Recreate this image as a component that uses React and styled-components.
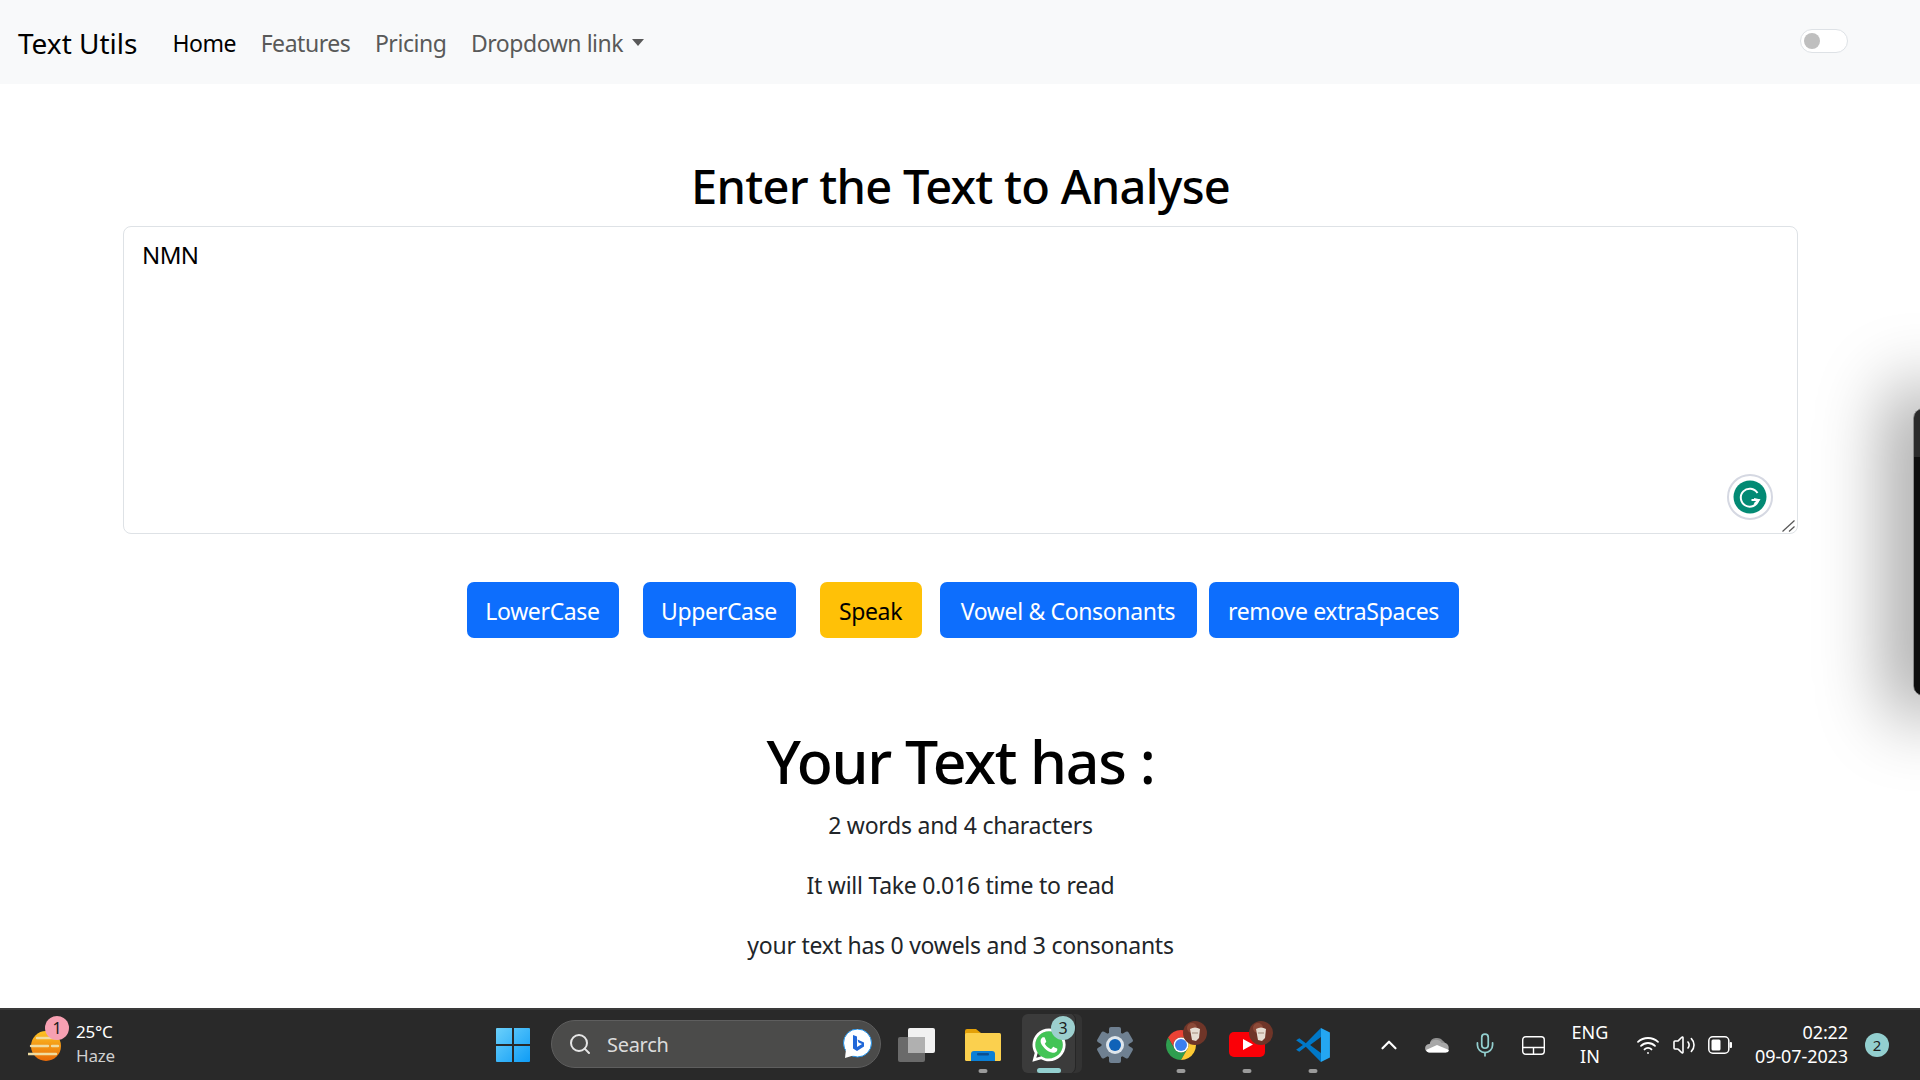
import styled, { createGlobalStyle } from "styled-components";
import { Mic, Search, Volume2, Wifi, ChevronUp } from "lucide-react";
import { FaWhatsapp } from "react-icons/fa";

const GlobalStyle = createGlobalStyle`
  html, body {
    margin: 0;
    padding: 0;
    background: #fff;
  }
  * {
    box-sizing: border-box;
  }
`;

const Page = styled.div`
  position: relative;
  width: 1920px;
  height: 1080px;
  overflow: hidden;
  display: flex;
  flex-direction: column;
  font-family: "Noto Sans", "Open Sans", sans-serif;
  color: #212529;
`;

const Navbar = styled.nav`
  height: 84px;
  flex: none;
  background: #f8f9fa;
  display: flex;
  align-items: center;
  padding: 2px 72px 0 18px;
`;

const Brand = styled.a`
  font-size: 28px;
  letter-spacing: 0;
  color: #000;
  margin-right: 35px;
`;

const NavLink = styled.a`
  font-size: 23px;
  letter-spacing: -0.45px;
  margin-right: 24.5px;
  color: ${(p) => (p.$active ? "#000" : "#595959")};
  display: flex;
  align-items: center;
`;

const Caret = styled.span`
  width: 0;
  height: 0;
  margin-left: 9px;
  margin-top: -2px;
  border-top: 7px solid #595959;
  border-left: 6.5px solid transparent;
  border-right: 6.5px solid transparent;
`;

const Toggle = styled.div`
  margin-left: auto;
  margin-top: -5px;
  width: 48px;
  height: 24px;
  border: 1px solid #dee2e6;
  border-radius: 12px;
  background: #fff;
  padding: 3px;
`;

const Knob = styled.div`
  width: 16px;
  height: 16px;
  border-radius: 50%;
  background: #bfbfbf;
`;

const Main = styled.main`
  flex: 1;
  padding: 0 122px 0 123px;
  text-align: center;
`;

const FormTitle = styled.h2`
  margin: 52px 0 0;
  height: 90px;
  line-height: 100px;
  font-size: 47px;
  font-weight: 500;
  letter-spacing: -0.75px;
  color: #000;
`;

const EditorWrap = styled.div`
  position: relative;
  height: 308px;
`;

const Editor = styled.textarea`
  display: block;
  width: 100%;
  height: 100%;
  border: 1px solid #dee2e6;
  border-radius: 8px;
  padding: 11px 18px;
  font-family: inherit;
  font-size: 24px;
  letter-spacing: -0.6px;
  color: #000;
  outline: none;
  resize: none;
`;

const ResizeGrip = styled.svg`
  position: absolute;
  right: 3px;
  bottom: 2px;
  width: 13px;
  height: 12px;
`;

const GrammarlyBadge = styled.div`
  position: absolute;
  right: 25px;
  bottom: 14px;
  width: 46px;
  height: 46px;
  border-radius: 50%;
  border: 2px solid #d5d8e2;
  background: #fff;
  display: flex;
  align-items: center;
  justify-content: center;
`;

const ButtonRow = styled.div`
  display: flex;
  margin-top: 48px;
  padding-left: 343.5px;
`;

const Button = styled.button`
  height: 56px;
  padding: 2px 0 0;
  width: ${(p) => p.$w}px;
  margin-right: ${(p) => p.$gap}px;
  border: none;
  border-radius: 7px;
  font-family: inherit;
  font-size: 23px;
  letter-spacing: -0.35px;
  background: ${(p) => (p.$warn ? "#ffc107" : "#0d6efd")};
  color: ${(p) => (p.$warn ? "#000" : "#fff")};
`;

const Summary = styled.section`
  margin-top: 81px;
`;

const SummaryTitle = styled.h1`
  margin: 0 0 7px;
  height: 84px;
  line-height: 84px;
  font-size: 59px;
  font-weight: 500;
  letter-spacing: -1.3px;
  color: #000;
`;

const SummaryLine = styled.p`
  margin: 0;
  height: 60px;
  line-height: 30px;
  font-size: 23px;
  letter-spacing: -0.25px;
  color: #212529;
`;

const SidePanel = styled.div`
  position: absolute;
  right: -14px;
  top: 408px;
  width: 21px;
  height: 288px;
  border-radius: 10px;
  border: 1px solid #8a8a8a;
  background: linear-gradient(#2b2b2b 0 48px, #0e0e0e 48px);
  box-shadow: 0 0 70px 24px rgba(0, 0, 0, 0.38);
`;

const Taskbar = styled.footer`
  height: 72px;
  flex: none;
  background: #292929;
  border-top: 2px solid #3a3a3a;
  display: flex;
  align-items: center;
  color: #fff;
  font-family: "Noto Sans", "Open Sans", sans-serif;
  position: relative;
`;

const Weather = styled.div`
  width: 480px;
  flex: none;
  display: flex;
  align-items: center;
  padding-left: 28px;
`;

const WeatherIcon = styled.div`
  position: relative;
  width: 36px;
  height: 36px;
  margin-top: 2px;
  margin-right: 12px;
`;

const WeatherText = styled.div`
  display: flex;
  flex-direction: column;
  font-size: 17px;
  line-height: 24px;
  letter-spacing: -0.2px;
  margin-top: -2px;
`;

const Haze = styled.span`
  color: #cfcfcf;
`;

const CountBadge = styled.span`
  position: absolute;
  top: ${(p) => p.$top}px;
  left: ${(p) => p.$left}px;
  width: 24px;
  height: 24px;
  border-radius: 50%;
  background: ${(p) => p.$color};
  color: #1c1c1c;
  font-size: 16px;
  display: flex;
  align-items: center;
  justify-content: center;
`;

const Slot = styled.div`
  position: relative;
  width: 66px;
  height: 70px;
  flex: none;
  display: flex;
  align-items: center;
  justify-content: center;
`;

const ActiveBack = styled.div`
  position: absolute;
  left: 6px;
  top: 4px;
  width: 60px;
  height: 59px;
  border-radius: 6px;
  background: #3b3b3b;
  box-shadow: inset -7px 0 0 -1px #333, inset -8px 0 0 -1px #262626;
`;

const IconHolder = styled.div`
  position: relative;
  width: 36px;
  height: 36px;
  display: flex;
  align-items: center;
  justify-content: center;
`;

const Indicator = styled.span`
  position: absolute;
  bottom: 7px;
  left: 50%;
  transform: translateX(-50%);
  height: ${(p) => (p.$active ? 5 : 4)}px;
  width: ${(p) => (p.$active ? 24 : 9)}px;
  border-radius: 3px;
  background: ${(p) => (p.$active ? "#93cfcf" : "#9a9a9a")};
`;

const SearchBox = styled.div`
  width: 330px;
  height: 48px;
  margin: -2px 3px 0 5px;
  flex: none;
  border-radius: 24px;
  background: #4b4b4a;
  border: 1px solid #5e5e5e;
  display: flex;
  align-items: center;
  padding: 0 8px 0 16px;
  color: #dcdcdc;
  font-size: 20px;
  letter-spacing: -0.3px;
`;

const SearchLabel = styled.span`
  margin-left: 15px;
  flex: 1;
`;

const Tray = styled.div`
  margin-left: 19px;
  display: flex;
  align-items: center;
`;

const TrayIcon = styled.div`
  width: ${(p) => p.$w || 48}px;
  height: 40px;
  flex: none;
  display: flex;
  align-items: center;
  justify-content: center;
`;

const Lang = styled.div`
  width: 68px;
  margin-left: -1px;
  margin-right: 6px;
  margin-top: -2px;
  text-align: center;
  font-size: 18px;
  line-height: 24px;
`;

const Clock = styled.div`
  width: 110px;
  text-align: right;
  font-size: 18px;
  line-height: 24px;
  letter-spacing: -0.1px;
  margin-right: 17px;
  margin-top: -2px;
`;

const NotifyBadge = styled.div`
  width: 24px;
  height: 24px;
  border-radius: 50%;
  background: #93cfcf;
  color: #1c1c1c;
  font-size: 15px;
  display: flex;
  align-items: center;
  justify-content: center;
`;

const GrammarlyIcon = () => (
  <svg width="34" height="34" viewBox="0 0 34 34">
    <circle cx="17" cy="17" r="16.5" fill="#038a74" />
    <path d="M24.5 13 A9 9 0 1 0 25.5 20 H18.5" fill="none" stroke="#fff" strokeWidth="2" />
    <path d="M21.5 24 L25.6 20 L21 19" fill="none" stroke="#fff" strokeWidth="2" />
  </svg>
);

const SunIcon = () => (
  <svg width="36" height="36" viewBox="0 0 36 36">
    <defs>
      <linearGradient id="sun" x1="0" y1="0" x2="0" y2="1">
        <stop offset="0" stopColor="#fdc323" />
        <stop offset="1" stopColor="#ea6a07" />
      </linearGradient>
    </defs>
    <circle cx="18" cy="18" r="15" fill="url(#sun)" />
    <g stroke="#f0dca0" strokeWidth="2.4" strokeLinecap="round">
      <path d="M9 10 H30" />
      <path d="M3 18 H20 M24 18 H30" />
      <path d="M0 26 H28" />
    </g>
  </svg>
);

const WindowsIcon = () => (
  <svg width="36" height="36" viewBox="0 0 36 36">
    <defs>
      <linearGradient id="win" x1="0" y1="0" x2="1" y2="1">
        <stop offset="0" stopColor="#6bd0fb" />
        <stop offset="1" stopColor="#0e9cf6" />
      </linearGradient>
    </defs>
    <path
      fill="url(#win)"
      d="M1 2 a1 1 0 0 1 1 -1 H17 V17 H1 Z M19 1 H34 a1 1 0 0 1 1 1 V17 H19 Z M1 19 H17 V35 H2 a1 1 0 0 1 -1 -1 Z M19 19 H35 V34 a1 1 0 0 1 -1 1 H19 Z"
    />
  </svg>
);

const BingIcon = () => (
  <svg width="30" height="30" viewBox="0 0 30 30">
    <circle cx="15.5" cy="14" r="14" fill="#fff" stroke="#1f8fe8" strokeWidth="1" />
    <path d="M4 20 L3 29 L13 26 Z" fill="#fff" />
    <path d="M11 6 L15 7.5 V18 L20 15 L16.5 13.5 L15.5 10.5 L22 13.5 V17.5 L15 22 L11 19.5 Z" fill="#2167d8" />
  </svg>
);

const TaskViewIcon = () => (
  <svg width="38" height="34" viewBox="0 0 38 34">
    <rect x="0" y="9" width="27" height="25" rx="2" fill="#6a6a6a" />
    <rect x="10" y="0" width="27" height="25" rx="2" fill="#f1f1f1" />
    <rect x="10" y="9" width="17" height="16" fill="#b0b0b0" />
  </svg>
);

const FolderIcon = () => (
  <svg width="36" height="34" viewBox="0 0 36 34">
    <path d="M0 3 a2 2 0 0 1 2 -2 H11 L16 5 H34 V10 H0 Z" fill="#e3a008" />
    <rect x="0" y="5" width="36" height="28" rx="1.5" fill="#fbd04e" />
    <path d="M6 33 V26 a3 3 0 0 1 3 -3 H27 a3 3 0 0 1 3 3 V33 Z" fill="#0a7fd6" />
    <rect x="12" y="25" width="12" height="2.4" rx="1" fill="#0b4f8f" />
  </svg>
);

const WhatsappIcon = () => (
  <>
    <svg width="30" height="30" viewBox="0 0 30 30" style={{ position: "absolute", left: 3, top: 3 }}>
      <circle cx="15" cy="15" r="14" fill="#43c456" />
    </svg>
    <FaWhatsapp size={38} color="#fff" style={{ position: "relative" }} />
  </>
);

const GearIcon = () => (
  <svg width="36" height="36" viewBox="0 0 36 36">
    <g fill="#6f8091" transform="translate(18 18)">
      {[0, 60, 120, 180, 240, 300].map((a) => (
        <rect key={a} x="-6" y="-18" width="12" height="10" rx="2" transform={`rotate(${a})`} />
      ))}
      <circle r="13.5" />
    </g>
    <circle cx="18" cy="18" r="9" fill="#dfe6ec" />
    <circle cx="18" cy="18" r="6" fill="#0f62b8" />
  </svg>
);

const ChromeIcon = () => (
  <svg width="38" height="38" viewBox="0 0 48 48">
    <path d="M6.68 14 A20 20 0 0 1 41.32 14 H24 A10 10 0 0 0 15.34 29 Z" fill="#ea4335" />
    <path d="M6.68 14 A20 20 0 0 0 24 44 L32.66 29 A10 10 0 0 1 15.34 29 Z" fill="#2f9e4f" />
    <path d="M41.32 14 A20 20 0 0 1 24 44 L32.66 29 A10 10 0 0 0 24 14 Z" fill="#fcc934" />
    <circle cx="24" cy="24" r="10" fill="#fff" />
    <circle cx="24" cy="24" r="8" fill="#3b7ff0" />
  </svg>
);

const YoutubeIcon = () => (
  <svg width="36" height="26" viewBox="0 0 36 26">
    <rect width="36" height="25" rx="5" fill="#fb0007" />
    <path d="M14 7 L24 12.5 L14 18 Z" fill="#fff" />
  </svg>
);

const VscodeIcon = () => (
  <svg width="36" height="36" viewBox="0 0 100 100">
    <path d="M72 3 L30 45 L12 31 L3 37 L22 50 L3 63 L12 69 L30 55 L72 97 V72 L42 50 L72 28 Z" fill="#0078c8" />
    <path d="M72 3 L97 15 V85 L72 97 Z" fill="#24a7f2" />
  </svg>
);

const AvatarBadge = () => (
  <svg width="24" height="24" viewBox="0 0 24 24" style={{ position: "absolute", left: 20, top: -6 }}>
    <circle cx="12" cy="12" r="12" fill="#6f3528" />
    <circle cx="9" cy="7" r="5" fill="#8c4a38" />
    <path d="M7 8 Q12 5 17 8 L16 17 L13 20 L9 19 Z" fill="#e6ddd2" />
    <path d="M9 11 H15 V13 H9 Z" fill="#c4b3a5" />
  </svg>
);

const CloudIcon = () => (
  <svg width="25" height="16" viewBox="0 0 25 16">
    <path d="M5 6 a7 6 0 0 1 13 -2 a5 5 0 0 1 2 2 Z" fill="#8f8f8f" />
    <path d="M4 15.5 a4.2 4.2 0 0 1 0.6 -8.4 a6.5 6 0 0 1 12 -1 a5 5 0 0 1 4 9.4 Z" fill="#a8a8a8" />
    <path d="M1 13 L12 8 L24 13 a3 3 0 0 1 -3 2.6 H4 a4 4 0 0 1 -3 -2.6 Z" fill="#fff" />
  </svg>
);

const TouchpadIcon = () => (
  <svg width="23" height="19" viewBox="0 0 23 19" fill="none" stroke="#fff" strokeWidth="1.4">
    <rect x="0.7" y="0.7" width="21.6" height="17.6" rx="3" />
    <path d="M0.7 11.5 H22.3 M11.5 11.5 V18.3" />
  </svg>
);

const BatteryIcon = () => (
  <svg width="24" height="18" viewBox="0 0 24 18">
    <rect x="0.8" y="0.8" width="20" height="16.4" rx="4" fill="none" stroke="#fff" strokeWidth="1.5" />
    <rect x="3.5" y="3.5" width="9" height="11" rx="1.5" fill="#fff" />
    <rect x="21.6" y="6" width="2.4" height="6" rx="1" fill="#fff" />
  </svg>
);

const App = () => {
  return (
    <Page>
      <GlobalStyle />
      <Navbar>
        <Brand>Text Utils</Brand>
        <NavLink $active>Home</NavLink>
        <NavLink>Features</NavLink>
        <NavLink>Pricing</NavLink>
        <NavLink>
          Dropdown link
          <Caret />
        </NavLink>
        <Toggle>
          <Knob />
        </Toggle>
      </Navbar>

      <Main>
        <FormTitle>Enter the Text to Analyse</FormTitle>
        <EditorWrap>
          <Editor defaultValue="NMN" spellCheck={false} />
          <GrammarlyBadge>
            <GrammarlyIcon />
          </GrammarlyBadge>
          <ResizeGrip viewBox="0 0 13 12" fill="none" stroke="#555" strokeWidth="1.2">
            <path d="M0.5 11.5 L12.5 0.5" />
            <path d="M7 11.5 L12.5 6.5" />
          </ResizeGrip>
        </EditorWrap>

        <ButtonRow>
          <Button $w={152} $gap={24}>LowerCase</Button>
          <Button $w={153} $gap={24}>UpperCase</Button>
          <Button $w={102} $gap={18} $warn>Speak</Button>
          <Button $w={257} $gap={12}>Vowel &amp; Consonants</Button>
          <Button $w={250} $gap={0}>remove extraSpaces</Button>
        </ButtonRow>

        <Summary>
          <SummaryTitle>Your Text has :</SummaryTitle>
          <SummaryLine>2 words and 4 characters</SummaryLine>
          <SummaryLine>It will Take 0.016 time to read</SummaryLine>
          <SummaryLine>your text has 0 vowels and 3 consonants</SummaryLine>
        </Summary>
      </Main>

      <SidePanel />

      <Taskbar>
        <Weather>
          <WeatherIcon>
            <SunIcon />
            <CountBadge $top={-12} $left={17} $color="#f7a0b2">1</CountBadge>
          </WeatherIcon>
          <WeatherText>
            <span>25°C</span>
            <Haze>Haze</Haze>
          </WeatherText>
        </Weather>

        <Slot><WindowsIcon /></Slot>
        <SearchBox>
          <Search size={24} color="#e6e6e6" strokeWidth={2} />
          <SearchLabel>Search</SearchLabel>
          <BingIcon />
        </SearchBox>
        <Slot><TaskViewIcon /></Slot>
        <Slot>
          <FolderIcon />
          <Indicator />
        </Slot>
        <Slot>
          <ActiveBack />
          <IconHolder>
            <WhatsappIcon />
            <CountBadge $top={-11} $left={20} $color="#9ccfce">3</CountBadge>
          </IconHolder>
          <Indicator $active />
        </Slot>
        <Slot><GearIcon /></Slot>
        <Slot>
          <IconHolder>
            <ChromeIcon />
            <AvatarBadge />
          </IconHolder>
          <Indicator />
        </Slot>
        <Slot>
          <IconHolder>
            <YoutubeIcon />
            <AvatarBadge />
          </IconHolder>
          <Indicator />
        </Slot>
        <Slot>
          <VscodeIcon />
          <Indicator />
        </Slot>

        <Tray>
          <TrayIcon><ChevronUp size={26} color="#fff" strokeWidth={2} /></TrayIcon>
          <TrayIcon><CloudIcon /></TrayIcon>
          <TrayIcon><Mic size={26} color="#93cfcf" strokeWidth={1.6} /></TrayIcon>
          <TrayIcon><TouchpadIcon /></TrayIcon>
          <Lang>ENG<br />IN</Lang>
          <TrayIcon $w={36}><Wifi size={24} color="#fff" strokeWidth={1.8} /></TrayIcon>
          <TrayIcon $w={36}><Volume2 size={24} color="#fff" strokeWidth={1.6} /></TrayIcon>
          <TrayIcon $w={36}><BatteryIcon /></TrayIcon>
          <Clock>02:22<br />09-07-2023</Clock>
          <NotifyBadge>2</NotifyBadge>
        </Tray>
      </Taskbar>
    </Page>
  );
};

export default App;
